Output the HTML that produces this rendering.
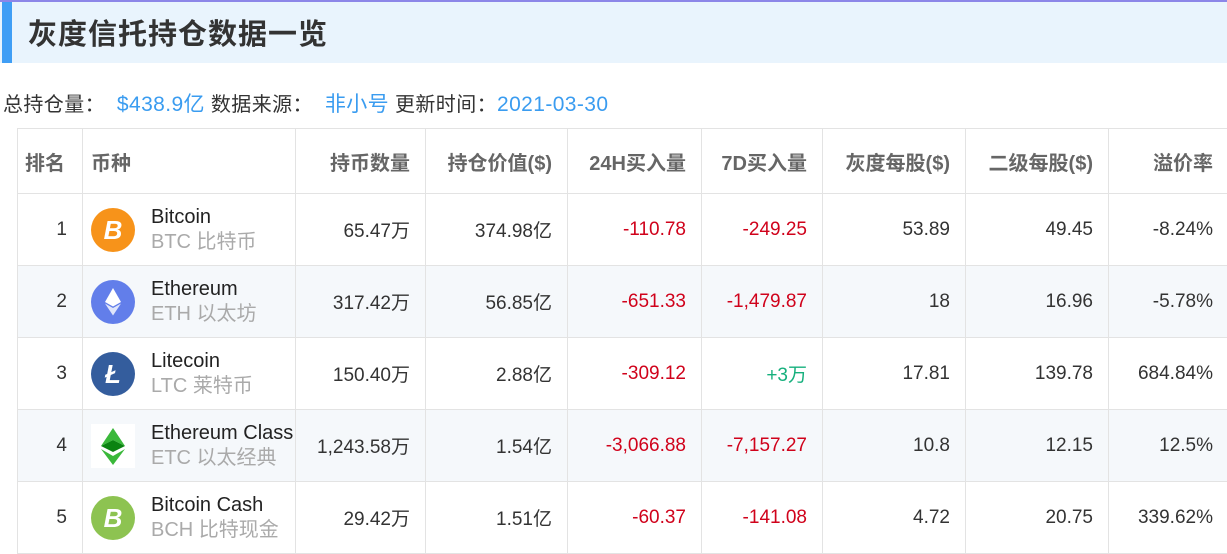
<!DOCTYPE html>
<html><head><meta charset="utf-8"><style>
*{margin:0;padding:0;box-sizing:border-box}
body{width:1227px;height:551px;overflow:hidden;background:#fff;font-family:"Liberation Sans","Noto Sans CJK SC",sans-serif;color:#333;position:relative}
.topline{position:absolute;left:0;top:0;width:1227px;height:2px;background:#8c86e8}
.banner{position:absolute;left:0;top:2px;width:1227px;height:61px;background:#e9f4fd}
.bar{position:absolute;left:2px;top:2px;width:10px;height:61px;background:#3f9ef5}
.title{position:absolute;left:28px;top:11px;font-size:29px;font-weight:bold;color:#333;letter-spacing:1px}
.info{position:absolute;left:3px;top:88px;font-size:20px;color:#333;white-space:pre;letter-spacing:0.4px}
.info b{font-weight:normal;color:#3a9cf0;font-size:21px}
table{position:absolute;left:17px;top:128px;width:1211px;border-collapse:collapse;font-size:19px;table-layout:fixed}
td,th{border:1px solid #e3e3e3;padding:0 15px;text-align:right;height:72px;white-space:nowrap;overflow:hidden}
th{height:65px;font-weight:bold;color:#666;font-size:20px}
tr:nth-child(odd) td{background:#f5f8fb}
td.l,th.l{text-align:left;padding:0 8px}
.r{color:#d0021b}.g{color:#16b07d}
.coin{display:flex;align-items:center}
.ic{width:44px;height:44px;border-radius:50%;margin-right:16px;flex:none;position:relative;color:#fff;font-weight:bold;font-size:26px;text-align:center;line-height:44px;font-style:italic}
.nm{font-size:20px;color:#222;line-height:24px;white-space:nowrap}
.sb{font-size:20px;color:#aaa;line-height:26px;white-space:nowrap}
</style></head><body>
<div class="topline"></div><div class="banner"></div><div class="bar"></div>
<div class="title">灰度信托持仓数据一览</div>
<div class="info">总持仓量：  <b>$438.9亿</b> 数据来源：  <b>非小号</b> 更新时间：<b>2021-03-30</b></div>
<table>
<colgroup><col style="width:65px"><col style="width:213px"><col style="width:130px"><col style="width:142px"><col style="width:134px"><col style="width:121px"><col style="width:143px"><col style="width:143px"><col style="width:120px"></colgroup>
<tr><th class="l" style="padding-left:7px">排名</th><th class="l">币种</th><th>持币数量</th><th>持仓价值($)</th><th>24H买入量</th><th>7D买入量</th><th>灰度每股($)</th><th>二级每股($)</th><th>溢价率</th></tr>
<tr><td>1</td><td class="l"><div class="coin"><div class="ic" style="background:#f7931a">B</div><div><div class="nm">Bitcoin</div><div class="sb">BTC 比特币</div></div></div></td><td>65.47万</td><td>374.98亿</td><td class="r">-110.78</td><td class="r">-249.25</td><td>53.89</td><td>49.45</td><td>-8.24%</td></tr>
<tr><td>2</td><td class="l"><div class="coin"><div class="ic" style="background:#627eea;font-style:normal"><svg width="44" height="44" viewBox="0 0 44 44"><path d="M22 8l-8 14 8 4.5 8-4.5z" fill="#fff"/><path d="M22 28l-8-4.5 8 12 8-12z" fill="#dfe5fb"/></svg></div><div><div class="nm">Ethereum</div><div class="sb">ETH 以太坊</div></div></div></td><td>317.42万</td><td>56.85亿</td><td class="r">-651.33</td><td class="r">-1,479.87</td><td>18</td><td>16.96</td><td>-5.78%</td></tr>
<tr><td>3</td><td class="l"><div class="coin"><div class="ic" style="background:#345d9d">Ł</div><div><div class="nm">Litecoin</div><div class="sb">LTC 莱特币</div></div></div></td><td>150.40万</td><td>2.88亿</td><td class="r">-309.12</td><td class="g">+3万</td><td>17.81</td><td>139.78</td><td>684.84%</td></tr>
<tr><td>4</td><td class="l"><div class="coin"><div class="ic" style="background:#fff;border-radius:0"><svg width="44" height="44" viewBox="0 0 44 44"><path d="M22 4l-12 18 12-6 12 6z" fill="#3ab83a"/><path d="M10 22l12 6 12-6-12-6z" fill="#0b8311"/><path d="M10 25l12 16 12-16-12 7z" fill="#3ab83a"/></svg></div><div><div class="nm">Ethereum Class</div><div class="sb">ETC 以太经典</div></div></div></td><td>1,243.58万</td><td>1.54亿</td><td class="r">-3,066.88</td><td class="r">-7,157.27</td><td>10.8</td><td>12.15</td><td>12.5%</td></tr>
<tr><td>5</td><td class="l"><div class="coin"><div class="ic" style="background:#8dc351">B</div><div><div class="nm">Bitcoin Cash</div><div class="sb">BCH 比特现金</div></div></div></td><td>29.42万</td><td>1.51亿</td><td class="r">-60.37</td><td class="r">-141.08</td><td>4.72</td><td>20.75</td><td>339.62%</td></tr>
</table>
</body></html>
